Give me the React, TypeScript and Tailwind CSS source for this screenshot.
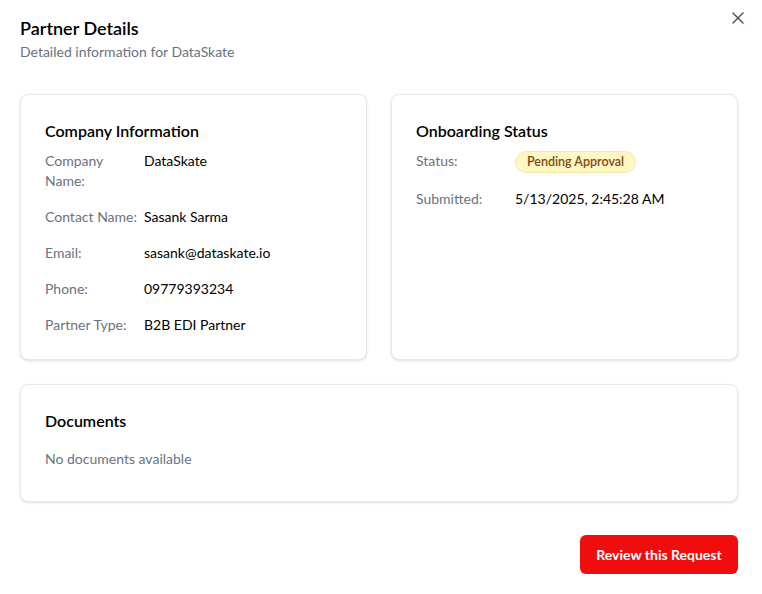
import { X } from 'lucide-react';

const companyRows: { label: string; value: string }[] = [
  { label: 'Company Name:', value: 'DataSkate' },
  { label: 'Contact Name:', value: 'Sasank Sarma' },
  { label: 'Email:', value: 'sasank@dataskate.io' },
  { label: 'Phone:', value: '09779393234' },
  { label: 'Partner Type:', value: 'B2B EDI Partner' },
];

function Card({ title, children, className = '' }: { title: string; children: React.ReactNode; className?: string }) {
  return (
    <div className={`bg-white border border-gray-200 rounded-lg shadow-sm px-6 pt-6 ${className}`}>
      <h3 className="text-base leading-6 font-semibold text-black">{title}</h3>
      {children}
    </div>
  );
}

export default function App() {
  return (
    <div
      className="relative w-[762px] h-[594px] bg-white pl-5 pr-6 pt-[14px]"
      style={{ fontFamily: 'Lato, sans-serif' }}
    >
      <button className="absolute right-[14px] top-[8px] text-gray-600 hover:text-gray-900">
        <X size={20} strokeWidth={1.8} />
      </button>

      <h2 className="text-lg leading-7 font-semibold text-black">Partner Details</h2>
      <p className="text-sm leading-5 text-gray-500">Detailed information for DataSkate</p>

      <div className="mt-8 grid grid-cols-2 gap-6">
        <Card title="Company Information" className="pb-6">
          <div className="mt-2 space-y-4">
            {companyRows.map((row) => (
              <div key={row.label} className="flex text-sm leading-5">
                <span className="w-[99px] shrink-0 text-gray-500">{row.label}</span>
                <span className="text-black">{row.value}</span>
              </div>
            ))}
          </div>
        </Card>

        <Card title="Onboarding Status" className="pb-6">
          <div className="mt-2 space-y-4">
            <div className="flex text-sm leading-5 items-center">
              <span className="w-[99px] shrink-0 text-gray-500 self-start">Status:</span>
              <span className="px-[11px] py-px rounded-full bg-[#fef6c3] border border-[#f7eaa6] text-[#7c4a12] text-[12.5px] leading-[18px] font-semibold">
                Pending Approval
              </span>
            </div>
            <div className="flex text-sm leading-5">
              <span className="w-[99px] shrink-0 text-gray-500">Submitted:</span>
              <span className="text-black">5/13/2025, 2:45:28 AM</span>
            </div>
          </div>
        </Card>
      </div>

      <Card title="Documents" className="mt-6 pb-8">
        <p className="mt-4 text-sm leading-5 text-gray-500">No documents available</p>
      </Card>

      <div className="mt-[33px] flex justify-end">
        <button className="h-[39px] w-[158px] rounded-md bg-[#ef0d0d] text-white text-sm font-bold hover:bg-red-700">
          Review this Request
        </button>
      </div>
    </div>
  );
}
